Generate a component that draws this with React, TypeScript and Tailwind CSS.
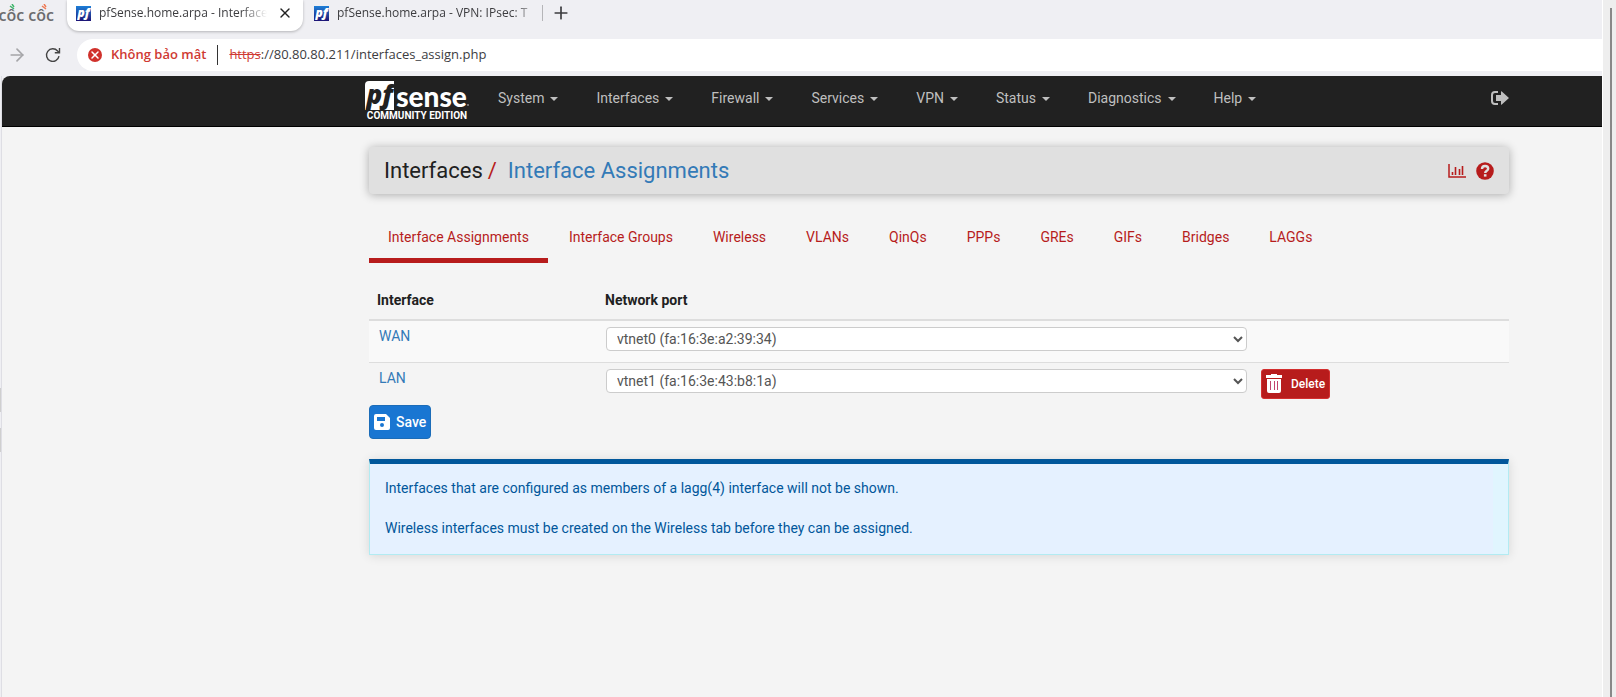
import { useState } from 'react';
import { clsx } from 'clsx';
import { ArrowRight, Plus, X } from 'lucide-react';

type Port = { name: string; port: string; removable: boolean };

const menuItems = ['System', 'Interfaces', 'Firewall', 'Services', 'VPN', 'Status', 'Diagnostics', 'Help'];

const tabs = [
  'Interface Assignments', 'Interface Groups', 'Wireless', 'VLANs', 'QinQs',
  'PPPs', 'GREs', 'GIFs', 'Bridges', 'LAGGs',
];

const ports = ['vtnet0 (fa:16:3e:a2:39:34)', 'vtnet1 (fa:16:3e:43:b8:1a)'];

const interfaces: Port[] = [
  { name: 'WAN', port: ports[0], removable: false },
  { name: 'LAN', port: ports[1], removable: true },
];

function Favicon() {
  return (
    <span className="flex h-[15px] w-[15px] shrink-0 items-center justify-center bg-linear-to-b from-[#1b7fd8] to-[#1c1275] font-['Open_Sans'] text-xs leading-none font-extrabold text-white italic">
      pf
    </span>
  );
}

function ReloadIcon() {
  return (
    <svg viewBox="0 0 16 16" className="h-4 w-4" fill="none" stroke="#454545" strokeWidth="1.4">
      <path d="M14 9.2A6.3 6.3 0 1 1 12.6 4L14.3 5.6" />
      <path d="M14.5 1v4.8H9.8" />
    </svg>
  );
}

function LogoutIcon() {
  return (
    <svg viewBox="0 0 18 14" className="h-[14px] w-[18px]">
      <path d="M7 1H4a3 3 0 0 0-3 3v6a3 3 0 0 0 3 3h3" fill="none" stroke="#bfbfbf" strokeWidth="2" />
      <path d="M5 4h5V.6q.2-.6.8-.2L18 7l-7.2 6.6q-.6.4-.8-.2V10H5z" fill="#bfbfbf" />
    </svg>
  );
}

function ChartIcon() {
  return (
    <svg viewBox="0 0 18 14" className="h-[14px] w-[18px]" fill="none" stroke="#b71c1c">
      <path d="M1 0v13h17" strokeWidth="1.5" />
      <path d="M4.5 11V8M7.5 11V3M11.5 11V5M14.5 11V2" strokeWidth="1.6" />
    </svg>
  );
}

function HelpIcon() {
  return (
    <svg viewBox="0 0 18 18" className="h-[18px] w-[18px]">
      <circle cx="9" cy="9" r="8.8" fill="#b71c1c" />
      <path d="M6 7C6 2.8 12.2 3.1 12.2 6.7 12.2 8.8 9.2 8.7 9.2 11" fill="none" stroke="#e0e0e0" strokeWidth="2.4" />
      <rect x="7.9" y="12.2" width="2.6" height="2.4" fill="#e0e0e0" />
    </svg>
  );
}

function TrashIcon() {
  return (
    <svg viewBox="0 0 16 19" className="h-[19px] w-4">
      <path d="M0 1h5V0h6v1h5v3H0zM1 5h14v12q0 2-2 2H3q-2 0-2-2z" fill="#fff" />
      <path d="M4.5 7v9M8.5 7v9M11.5 7v9" stroke="#c2456e" strokeWidth="1" />
    </svg>
  );
}

function SaveIcon() {
  return (
    <svg viewBox="0 0 16 16" className="h-4 w-4">
      <path
        d="M2 0H12l4 4v10a2 2 0 0 1-2 2H2a2 2 0 0 1-2-2V2a2 2 0 0 1 2-2zM3 3v4h8V3zM8 9a2 2 0 1 0 0 4 2 2 0 0 0 0-4z"
        fill="#fff"
        fillRule="evenodd"
      />
    </svg>
  );
}

function CocCocLogo() {
  return (
    <div className="relative flex h-full w-[67px] shrink-0 items-center justify-end pr-[13px] font-['Open_Sans'] text-base font-semibold whitespace-nowrap text-[#6b6b6e]">
      côc côc
      <svg viewBox="0 0 40 6" className="absolute top-1 left-[9px] h-[6px] w-10" fill="none" strokeWidth="1.5">
        <path d="M1 2l4 3M3 0l2 3" stroke="#3fb56b" />
        <path d="M33 2l4 3M35 0l2 3" stroke="#ef7a55" />
      </svg>
    </div>
  );
}

function BrowserBar() {
  return (
    <div className="font-['Open_Sans',sans-serif] text-[#3c3c3f]">
      {/* Tab strip */}
      <div className="flex h-[39px] items-start text-xs">
        <div className="h-[30px]">
          <CocCocLogo />
        </div>
        <div className="flex h-[31px] w-[236px] items-center rounded-b-xl bg-white pb-[5px] pl-[9px] shadow-[0_1px_3px_rgba(0,0,0,0.25)]">
          <Favicon />
          <span className="ml-2 w-[168px] mask-r-from-85% whitespace-nowrap">pfSense.home.arpa - Interface</span>
          <button aria-label="Close tab" className="ml-[10px]">
            <X className="h-4 w-4 text-[#222]" strokeWidth={2} />
          </button>
        </div>
        <div className="flex h-[26px] items-center pl-[11px]">
          <Favicon />
          <span className="ml-2 w-[205px] mask-r-from-85% whitespace-nowrap">pfSense.home.arpa - VPN: IPsec: T</span>
          <span className="h-4 w-px bg-[#b5b5b8]" />
          <button aria-label="New tab" className="ml-2">
            <Plus className="h-5 w-5" strokeWidth={2} />
          </button>
        </div>
      </div>

      {/* Address row */}
      <div className="flex h-8 items-center">
        <button aria-label="Forward" className="ml-[7px] text-[#a5a5a8]">
          <ArrowRight className="h-5 w-5" strokeWidth={2} />
        </button>
        <button aria-label="Reload" className="ml-[18px]">
          <ReloadIcon />
        </button>
        <div className="ml-4 flex h-8 flex-1 items-center rounded-l-full bg-white pl-[11px] text-[13px]">
          <span className="flex h-[14px] w-[14px] items-center justify-center rounded-full bg-[#d0312b] text-white">
            <X className="h-3 w-3" strokeWidth={3} />
          </span>
          <span className="ml-[9px] font-semibold text-[#cf3a33]">Không bảo mật</span>
          <span className="mx-[11px] h-5 w-px bg-[#333]" />
          <span>
            <s className="text-[#cf3a33]">https</s>://80.80.80.211/interfaces_assign.php
          </span>
        </div>
      </div>
    </div>
  );
}

function Brand() {
  return (
    <a href="#" className="flex w-[106px] shrink-0 flex-col items-center text-white">
      <span className="flex h-[29px] items-center">
        <span className="flex h-[29px] w-[29px] items-center justify-center rounded-tl bg-white pb-1 font-['Open_Sans'] text-[26px] leading-none font-extrabold text-[#212121] italic">
          pf
        </span>
        <span className="ml-0.5 font-['Lato'] text-[28px] leading-none font-black">sense</span>
        <span className="mb-1 h-0.5 w-0.5 self-end rounded-full bg-[#8a8a8a]" />
      </span>
      <span className="text-[10px] leading-[12px] font-bold whitespace-nowrap">COMMUNITY EDITION</span>
    </a>
  );
}

function Navbar() {
  return (
    <nav className="flex h-[51px] items-start rounded-tl-lg border-b border-black bg-[#212121] pr-[93px] pl-[362px]">
      <div className="pt-[5px]">
        <Brand />
      </div>
      <ul className="flex h-11 items-center pl-[9px]">
        {menuItems.map((item) => (
          <li key={item}>
            <button className="flex items-center gap-[6px] px-[19px] text-sm text-[#bfbfbf]">
              {item}
              <span className="mt-0.5 border-x-4 border-t-4 border-x-transparent border-t-[#bfbfbf]" />
            </button>
          </li>
        ))}
      </ul>
      <a href="#" aria-label="Logout" className="ml-auto flex h-11 items-center">
        <LogoutIcon />
      </a>
    </nav>
  );
}

function TabBar({ active, onSelect }: { active: string; onSelect: (tab: string) => void }) {
  return (
    <div className="mt-[22px] flex gap-0.5">
      {tabs.map((tab) => (
        <button
          key={tab}
          onClick={() => onSelect(tab)}
          className={clsx(
            'h-[47px] border-b-[5px] px-[19px] pb-px text-sm whitespace-nowrap text-[#b71c1c]',
            tab === active ? 'border-[#b71c1c]' : 'border-transparent'
          )}
        >
          {tab}
        </button>
      ))}
    </div>
  );
}

function PortTable() {
  return (
    <table className="mt-4 w-full table-fixed text-left text-sm">
      <thead>
        <tr className="h-[41px] border-b-2 border-[#ddd]">
          <th className="w-1/5 px-2 pt-0.5 font-bold">Interface</th>
          <th className="px-2 pt-0.5 font-bold">Network port</th>
          <th className="w-[256px]" aria-label="Actions" />
        </tr>
      </thead>
      <tbody>
        {interfaces.map((row) => (
          <tr key={row.name} className="h-[42px] border-b border-[#ddd] align-top odd:bg-[#f9f9f9] last:border-b-0">
            <td className="px-[10px] py-[5px]">
              <a href="#" className="text-[#337ab7]">{row.name}</a>
            </td>
            <td className="py-[6px] pr-[6px] pl-[9px]">
              <select
                aria-label={`${row.name} network port`}
                defaultValue={row.port}
                className="block h-6 w-full rounded border border-[#ccc] bg-white px-[6px] text-sm text-[#555]"
              >
                {ports.map((port) => (
                  <option key={port}>{port}</option>
                ))}
              </select>
            </td>
            <td className="px-2 py-[6px]">
              {row.removable && (
                <button className="flex h-[30px] items-center gap-[9px] rounded-[3px] border border-[#d32f2f] bg-[#b71c1c] px-1 text-xs font-medium text-white">
                  <TrashIcon />
                  Delete
                </button>
              )}
            </td>
          </tr>
        ))}
      </tbody>
    </table>
  );
}

export default function App() {
  const [activeTab, setActiveTab] = useState(tabs[0]);

  return (
    <div className="flex min-h-screen bg-[#efeff3] font-['Roboto',sans-serif] text-[#212121]">
      <div className="flex min-w-0 flex-1 flex-col">
        <BrowserBar />

        <div className="mt-[5px] flex flex-1">
          {/* Window edge with its two notches */}
          <div className="flex w-0.5 flex-col border-r border-[#dedee4] pt-[312px]">
            <span className="h-6 bg-[#cfcfcf]" />
            <span className="mt-4 h-6 bg-[#cfcfcf]" />
          </div>

          <div className="min-w-0 flex-1 rounded-tl-lg bg-[#f4f4f4]">
            <Navbar />

            <main className="pt-5 pr-[93px] pl-[367px]">
              <header className="flex h-[47px] items-center rounded bg-[#e0e0e0] px-[15px] shadow-[0_1px_10px_rgba(0,0,0,0.3)]">
                <h1 className="flex text-[22px]">
                  Interfaces
                  <span className="mx-[5px] text-[#b71c1c]">/</span>
                  <a href="#" className="ml-[6px] text-[#337ab7]">Interface Assignments</a>
                </h1>
                <div className="ml-auto flex items-center gap-[10px]">
                  <a href="#" aria-label="Status"><ChartIcon /></a>
                  <a href="#" aria-label="Help"><HelpIcon /></a>
                </div>
              </header>

              <TabBar active={activeTab} onSelect={setActiveTab} />
              <PortTable />

              <button className="flex h-[34px] items-center gap-[6px] rounded border border-[#1b6cb8] bg-[#1976d2] px-1 text-sm font-medium text-white">
                <SaveIcon />
                Save
              </button>

              <div className="mt-5 border border-t-[5px] border-[#b2ebf2] border-t-[#01579b] bg-[#e0f5fe] pr-[15px] text-sm text-[#01579b] shadow-[0_1px_10px_rgba(0,0,0,0.12)]">
                <div className="bg-[#e5f1ff] pt-[14px] pb-4 pl-[15px]">
                  <p>Interfaces that are configured as members of a lagg(4) interface will not be shown.</p>
                  <p className="mt-5">Wireless interfaces must be created on the Wireless tab before they can be assigned.</p>
                </div>
              </div>
            </main>
          </div>
        </div>
      </div>

      {/* Right window edge */}
      <div className="flex w-[14px] border-l border-white bg-[#eee] pt-2 pl-[7px]">
        <span className="w-0.5 bg-[#888]" />
      </div>
    </div>
  );
}
